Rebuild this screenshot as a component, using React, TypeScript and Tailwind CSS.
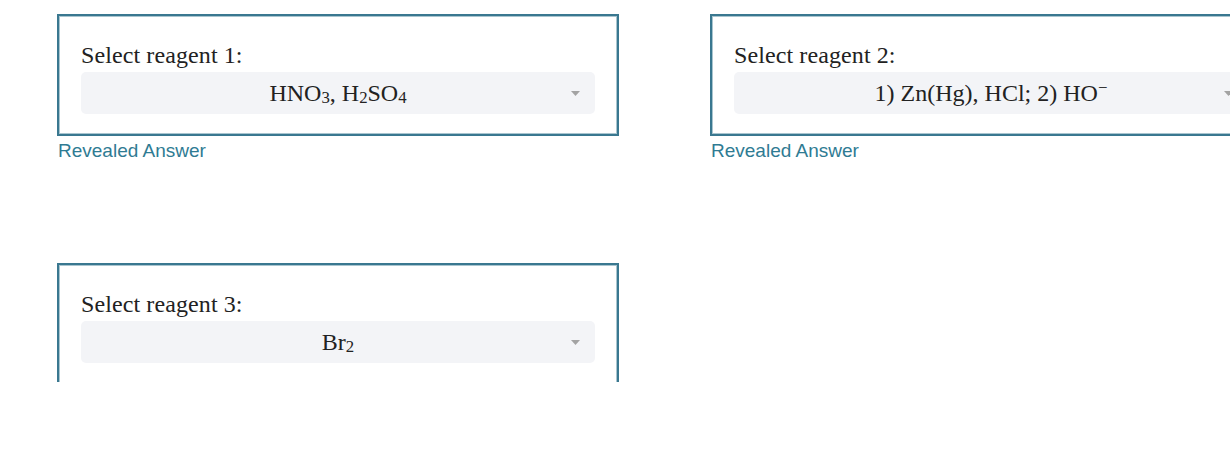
import React from "react";

function Arrow() {
  return (
    <svg width="9" height="5" viewBox="0 0 9 5">
      <path d="M0 0 L9 0 L4.5 5 Z" fill="#a3a3a3" />
    </svg>
  );
}

function Box({ label, children }: { label: string; children: React.ReactNode }) {
  return (
    <div className="w-[562px] border-2 border-[#3a7890] shadow-[inset_0_0_0_1px_#a9c5cf] px-[22px] pt-[25px] pb-[20px] flex flex-col gap-[3px]">
      <div className="text-[24px] leading-[28px] text-[#222] font-['Liberation_Serif',serif] tracking-[0.1px]">{label}</div>
      <div className="h-[42px] w-[514px] rounded-[5px] bg-[#f3f4f7] grid grid-cols-[1fr_auto_1fr] items-center text-[24px] text-[#222] font-['Liberation_Serif',serif] whitespace-nowrap">
        <div />
        <div>{children}</div>
        <div className="flex justify-end pr-[15px]">
          <Arrow />
        </div>
      </div>
    </div>
  );
}

function Revealed() {
  return (
    <div className="pl-[1px] text-[19px] leading-[22px] text-[#2f7b93] font-['Liberation_Sans',Arial,sans-serif]">
      Revealed Answer
    </div>
  );
}

const sub = "text-[0.7em] relative top-[0.12em] align-baseline";

export default function App() {
  return (
    <div className="w-[1230px] h-[458px] overflow-hidden bg-white">
      <div className="h-[382px] overflow-hidden pl-[57px] pt-[14px]">
        <div className="grid grid-cols-[562px_562px] gap-x-[91px] gap-y-[101px]">
          <div className="flex flex-col gap-[4px]">
            <Box label="Select reagent 1:">
              <span>
                HNO<span className={sub}>3</span>, H<span className={sub}>2</span>SO<span className={sub}>4</span>
              </span>
            </Box>
            <Revealed />
          </div>
          <div className="flex flex-col gap-[4px]">
            <Box label="Select reagent 2:">
              <span>
                1) Zn(Hg), HCl; 2) HO<span className="text-[0.7em] relative -top-[0.45em]">−</span>
              </span>
            </Box>
            <Revealed />
          </div>
          <div>
            <Box label="Select reagent 3:">
              <span>
                Br<span className={sub}>2</span>
              </span>
            </Box>
          </div>
        </div>
      </div>
    </div>
  );
}
